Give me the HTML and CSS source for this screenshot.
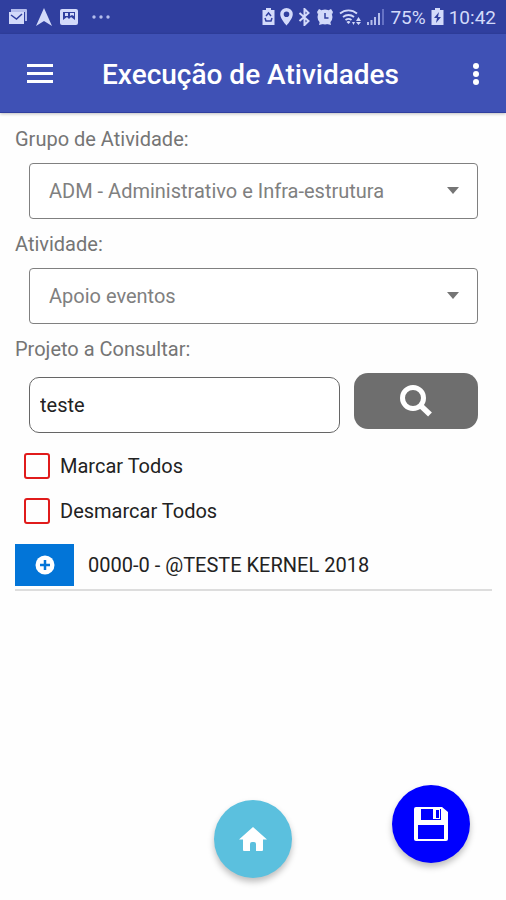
FILE: index.html
```html
<!DOCTYPE html>
<html lang="pt-BR">
<head>
    <meta charset="UTF-8">
    <meta name="viewport" content="width=device-width, initial-scale=1.0">
    <title>Execução de Atividades</title>
    <link rel="stylesheet" href="styles.css">
</head>
<body>

    <div class="status-bar">
        <div class="status-left">
            <svg width="20" height="18" viewBox="0 0 20 18">
                <path d="M3 1h15a1 1 0 0 1 1 1v11h-2V4H3z" fill="#b4bdec"/>
                <path d="M1 4h15v12H1z" fill="#d3dafa"/>
                <path d="M3 7l5.500 4L14 6" fill="none" stroke="#303f9f" stroke-width="1.500"/>
            </svg>
            <svg width="16" height="18" viewBox="0 0 16 18">
                <path d="M8 0l8 18-8-5-8 5z" fill="#d3dafa"/>
            </svg>
            <svg width="18" height="18" viewBox="0 0 18 18">
                <rect x="0" y="1" width="18" height="16" rx="2" fill="#d3dafa"/>
                <path d="M3 4h12v8l-4-3-2 2-2-2-4 3z" fill="#303f9f"/>
                <path d="M5 5h3v3H5zM10 5h4v3l-2-1-2 1z" fill="#d3dafa"/>
            </svg>
            <svg class="dots" width="18" height="4" viewBox="0 0 18 4" fill="#b4bdec">
                <circle cx="2" cy="2" r="1.700"/>
                <circle cx="9" cy="2" r="1.700"/>
                <circle cx="16" cy="2" r="1.700"/>
            </svg>
        </div>
        <div class="status-right">
            <svg width="13" height="18" viewBox="0 0 13 18">
                <path d="M4 0h5v2h3.500v15H.5V2H4z" fill="#d3dafa"/>
                <path d="M4 8l2.500-3L9 8M3 10l1 3h5l1-3" fill="none" stroke="#303f9f" stroke-width="1.500"/>
            </svg>
            <svg width="13" height="18" viewBox="0 0 13 18">
                <path fill-rule="evenodd" d="M6.500 0A6.300 6.300 0 0 0 .2 6.300C.2 11 6.500 17.500 6.500 17.500S12.800 11 12.800 6.300A6.300 6.300 0 0 0 6.500 0zm0 3.500a2.800 2.800 0 1 1 0 5.600 2.800 2.800 0 0 1 0-5.600z" fill="#d3dafa"/>
            </svg>
            <svg width="13" height="18" viewBox="0 0 13 18">
                <path d="M1.500 5l9 8L6.500 17V1l4 4-9 8" fill="none" stroke="#d3dafa" stroke-width="2"/>
            </svg>
            <svg width="18" height="18" viewBox="0 0 18 18">
                <path d="M3 1l3 1.500L2 6.500 1 4zM15 1l-3 1.500 4 4L17 4zM3 17l1-4 3 3zM15 17l-1-4-3 3z" fill="#d3dafa"/>
                <circle cx="9" cy="9" r="7.500" fill="#d3dafa"/>
                <path d="M9 5v5h3.500" fill="none" stroke="#303f9f" stroke-width="1.500"/>
            </svg>
            <svg width="23" height="18" viewBox="0 0 23 18">
                <path d="M1 5.500a13 13 0 0 1 17 0M4 9a8.500 8.500 0 0 1 11 0M6.500 12a5 5 0 0 1 6 0" fill="none" stroke="#d3dafa" stroke-width="1.800"/>
                <path d="M7.500 14L9.500 16l2-2a3 3 0 0 0-4 0zM17 13l2.500-4 2.500 4zM17 14h5l-2.500 3zM13 14h3l-1.500 3z" fill="#d3dafa"/>
            </svg>
            <svg width="18" height="18" viewBox="0 0 18 18">
                <path d="M1 17v-3M4.500 17v-5M8 17V9M12 17V5" stroke="#b4bdec" stroke-width="2"/>
                <path d="M16 17V1" stroke="#6572c4" stroke-width="2"/>
            </svg>
            <span class="status-text">75%</span>
            <svg width="13" height="18" viewBox="0 0 13 18">
                <path d="M4 0h5v2h3.500v15H.5V2H4z" fill="#d3dafa"/>
                <path d="M8 4L3 10h3l-1 5 5-6H7z" fill="#303f9f"/>
            </svg>
            <span class="status-text">10:42</span>
        </div>
    </div>

    <header class="header">
        <button class="menu-btn" aria-label="Menu">
            <svg width="28" height="20" viewBox="0 0 28 20" fill="#fff">
                <path d="M1 0h26v3H1zM1 8h26v3H1zM1 16h26v3H1z"/>
            </svg>
        </button>
        <h1 class="title">Execução de Atividades</h1>
        <button class="more-btn" aria-label="Mais opções">
            <svg width="8" height="24" viewBox="0 0 8 24" fill="#fff">
                <circle cx="4" cy="4" r="3"/>
                <circle cx="4" cy="12" r="3"/>
                <circle cx="4" cy="20" r="3"/>
            </svg>
        </button>
    </header>

    <main class="content">
        <label class="field-label" for="grupo">Grupo de Atividade:</label>
        <div class="select-box">
            <select id="grupo" class="select">
                <option>ADM - Administrativo e Infra-estrutura</option>
            </select>
            <svg class="arrow" width="12" height="7" viewBox="0 0 12 7"><path d="M0 0h12L6 7z" fill="#757575"/></svg>
        </div>

        <label class="field-label" for="atividade">Atividade:</label>
        <div class="select-box">
            <select id="atividade" class="select">
                <option>Apoio eventos</option>
            </select>
            <svg class="arrow" width="12" height="7" viewBox="0 0 12 7"><path d="M0 0h12L6 7z" fill="#757575"/></svg>
        </div>

        <label class="field-label" for="projeto">Projeto a Consultar:</label>
        <form action="" class="search-form">
            <input type="text" id="projeto" class="search-input" value="teste">
            <button class="search-btn" aria-label="Consultar">
                <svg width="32" height="32" viewBox="0 0 32 32" fill="none" stroke="#fff">
                    <circle cx="13" cy="13" r="10.500" stroke-width="5"/>
                    <path d="M20.500 20.500L30 29.500" stroke-width="5.500"/>
                </svg>
            </button>
        </form>

        <div class="checks">
            <label class="check"><input type="checkbox" class="check-input">Marcar Todos</label>
            <label class="check"><input type="checkbox" class="check-input">Desmarcar Todos</label>
        </div>

        <ul class="projects">
            <li class="project">
                <button class="add-btn" aria-label="Adicionar">
                    <svg width="20" height="20" viewBox="0 0 20 20">
                        <circle cx="10" cy="10" r="9.500" fill="#fff"/>
                        <path d="M10 5v10M5 10h10" stroke="#0275d8" stroke-width="2.500"/>
                    </svg>
                </button>
                <span>0000-0 - @TESTE KERNEL 2018</span>
            </li>
        </ul>
    </main>

    <button class="fab fab-home" aria-label="Início">
        <svg width="28" height="26" viewBox="0 0 28 26">
            <path d="M14 1L0 13.500h4V24a1 1 0 0 0 1 1h6v-7a2 2 0 0 1 2-2h2a2 2 0 0 1 2 2v7h6a1 1 0 0 0 1-1V13.500h4z" fill="#fff"/>
        </svg>
    </button>
    <button class="fab fab-save" aria-label="Salvar">
        <svg width="34" height="34" viewBox="0 0 34 34">
            <path d="M2 0h26l6 5v27a2 2 0 0 1-2 2H2a2 2 0 0 1-2-2V2a2 2 0 0 1 2-2z" fill="#fff"/>
            <path d="M7 2h20v11H7zM4 18h26v14H4z" fill="#0000ff"/>
            <path d="M19 2h7v10h-7z" fill="#fff"/>
            <path d="M22 3h3v8h-3z" fill="#0000ff"/>
        </svg>
    </button>

</body>
</html>
```
FILE: styles.css
```css
* {
    margin: 0;
    padding: 0;
    box-sizing: border-box;
    font-family: Roboto, 'Liberation Sans', sans-serif;
}
body {
    background: #fefefe;
    min-height: 100vh;
    color: #222;
    font-size: 20px;
}
svg {
    display: block;
    flex-shrink: 0;
}
button {
    display: flex;
    align-items: center;
    justify-content: center;
    border: none;
    background: transparent;
    cursor: pointer;
}
.status-bar {
    display: flex;
    align-items: center;
    justify-content: space-between;
    height: 34px;
    padding: 0 10px 0 8px;
    background: #303f9f;
}
.status-left {
    display: flex;
    align-items: center;
    gap: 8px;
}
.dots {
    margin-left: 6px;
}
.status-right {
    display: flex;
    align-items: center;
    gap: 5px;
}
.status-text {
    color: #d3dafa;
    font-size: 19px;
}
.header {
    display: flex;
    align-items: center;
    height: 79px;
    padding: 2px 26px 0;
    background: #3f51b5;
    border-bottom: 1px solid #303f9f;
    box-shadow: 0 1px 3px rgba(0, 0, 0, 0.25);
}
.title {
    flex: 1;
    margin-left: 48px;
    color: #fff;
    font-size: 28px;
    font-weight: 500;
}
.content {
    padding: 1px 14px 0 15px;
}
.field-label {
    display: block;
    padding-top: 2px;
    line-height: 47px;
    color: #757575;
}
.select-box {
    position: relative;
    margin: 0 14px;
}
.select {
    display: block;
    width: 100%;
    height: 56px;
    padding: 0 40px 0 19px;
    border: 1px solid #808080;
    border-radius: 4px;
    background: #fff;
    color: #808080;
    font-size: 20px;
    appearance: none;
}
.arrow {
    position: absolute;
    top: 24px;
    right: 19px;
    pointer-events: none;
}
.search-form {
    display: flex;
    gap: 14px;
    margin: 0 14px;
}
.search-input {
    flex: 1;
    min-width: 0;
    height: 56px;
    margin-top: 4px;
    padding: 0 10px;
    border: 1px solid #666;
    border-radius: 10px;
    background: #fff;
    color: #222;
    font-size: 20px;
}
.search-btn {
    width: 124px;
    height: 56px;
    border-radius: 14px;
    background: #6e6e6e;
}
.checks {
    margin-top: 10px;
    padding-left: 9px;
}
.check {
    display: flex;
    align-items: center;
    gap: 10px;
    height: 45px;
}
.check-input {
    width: 26px;
    height: 26px;
    border: 2px solid #e01b1b;
    border-radius: 3px;
    appearance: none;
}
.check-input:checked {
    background: #e01b1b;
}
.projects {
    margin-top: 11px;
    list-style: none;
}
.project {
    display: flex;
    align-items: center;
    gap: 14px;
    padding-bottom: 3px;
    border-bottom: 2px solid #ddd;
}
.add-btn {
    width: 59px;
    height: 42px;
    background: #0275d8;
}
/* floating buttons stay over the list */
.fab {
    position: fixed;
    width: 78px;
    height: 78px;
    border-radius: 50%;
    box-shadow: 0 4px 6px rgba(0, 0, 0, 0.25);
}
.fab-home {
    left: calc(50% - 39px);
    bottom: 22px;
    background: #5bc0de;
}
.fab-save {
    right: 36px;
    bottom: 37px;
    background: #0000ff;
}
```
